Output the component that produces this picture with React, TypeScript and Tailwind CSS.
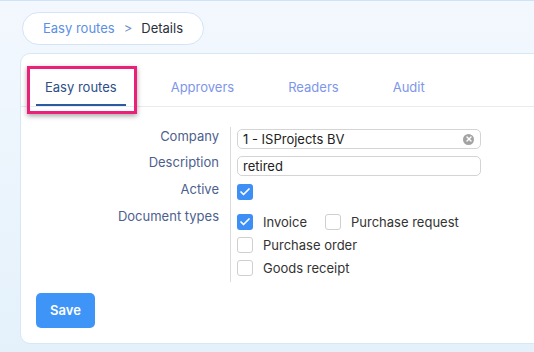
import { Check, X } from "lucide-react";

function Box({ checked }: { checked?: boolean }) {
  return checked ? (
    <span className="flex h-4 w-4 shrink-0 items-center justify-center rounded-[3px] bg-[#3d8ef5]">
      <Check className="h-3 w-3 text-white" strokeWidth={3.5} />
    </span>
  ) : (
    <span className="block h-4 w-4 shrink-0 rounded-[3px] border border-[#cfcfcf] bg-white" />
  );
}

export default function App() {
  return (
    <div
      className="h-[352px] w-[534px] overflow-hidden border-t border-[#cfe3f7] bg-gradient-to-b from-[#f3f8fe] to-[#e4f1fb] pl-5 pt-[11px] text-[13px]"
      style={{ fontFamily: "Inter, 'Noto Sans', sans-serif" }}
    >
      <div className="ml-[2px] inline-flex h-[33px] w-[182px] items-center gap-[9px] rounded-full border border-[#d3e4f5] bg-white pl-5">
        <span className="text-[#5c8fe4]">Easy routes</span>
        <span className="text-[#6f8fc8]">&gt;</span>
        <span className="text-[#2a2f3a]">Details</span>
      </div>

      <div className="relative mt-2 w-[540px] rounded-[10px] border border-[#d6e7f6] bg-white pb-[15px] pt-[23px]">
        <div className="flex gap-9 border-b border-[#e8ebef] pl-[15px]">
          <div className="border-b-2 border-[#2c5aa0] px-[9px] pb-[7px] leading-5 text-[#2c4f86]">Easy routes</div>
          <div className="px-[9px] pb-[9px] leading-5 text-[#7e96ea]">Approvers</div>
          <div className="px-[9px] pb-[9px] leading-5 text-[#7e96ea]">Readers</div>
          <div className="px-[9px] pb-[9px] leading-5 text-[#7e96ea]">Audit</div>
        </div>

        <div className="absolute left-[6px] top-[12px] h-[48px] w-[110px] border-[3px] border-[#ea2079] shadow-[0_2px_5px_rgba(0,0,0,0.35)]" />

        <div className="mt-5 grid grid-cols-[209px_1fr] leading-4 text-[#4d5f8e]">
          <div className="pr-[11px] pt-px text-right">Company</div>
          <div className="border-l border-[#dcdcdc] pb-[3px] pl-[6px] pt-[2px]">
            <div className="flex h-5 w-[244px] items-center justify-between rounded-[5px] border border-[#d4d4d4] pl-[5px] pr-[6px] text-[#222]">
              <span>1 - ISProjects BV</span>
              <span className="flex h-[11px] w-[11px] items-center justify-center rounded-full bg-[#a3a3a3]">
                <X className="h-2 w-2 text-white" strokeWidth={4} />
              </span>
            </div>
          </div>

          <div className="pr-[11px] pt-[2px] text-right">Description</div>
          <div className="border-l border-[#dcdcdc] py-[4px] pl-[6px]">
            <div className="flex h-5 w-[244px] items-center rounded-[5px] border border-[#d4d4d4] pl-[5px] text-[#222]">
              retired
            </div>
          </div>

          <div className="pr-[11px] pt-px text-right">Active</div>
          <div className="border-l border-[#dcdcdc] pb-[6px] pl-[6px] pt-[4px]">
            <Box checked />
          </div>

          <div className="pr-[11px] pt-[2px] text-right">Document types</div>
          <div className="flex flex-col gap-[7px] border-l border-[#dcdcdc] pb-[6px] pl-[6px] pt-[8px] text-[#333]">
            <div className="flex items-center">
              <Box checked />
              <span className="ml-[10px]">Invoice</span>
              <span className="ml-[18px] flex">
                <Box />
              </span>
              <span className="ml-[10px]">Purchase request</span>
            </div>
            <div className="flex items-center">
              <Box />
              <span className="ml-[10px]">Purchase order</span>
            </div>
            <div className="flex items-center">
              <Box />
              <span className="ml-[10px]">Goods receipt</span>
            </div>
          </div>
        </div>

        <button className="ml-[15px] mt-[11px] h-[35px] w-[59px] rounded-[5px] bg-[#3e94f7] font-semibold text-white">
          Save
        </button>
      </div>
    </div>
  );
}
